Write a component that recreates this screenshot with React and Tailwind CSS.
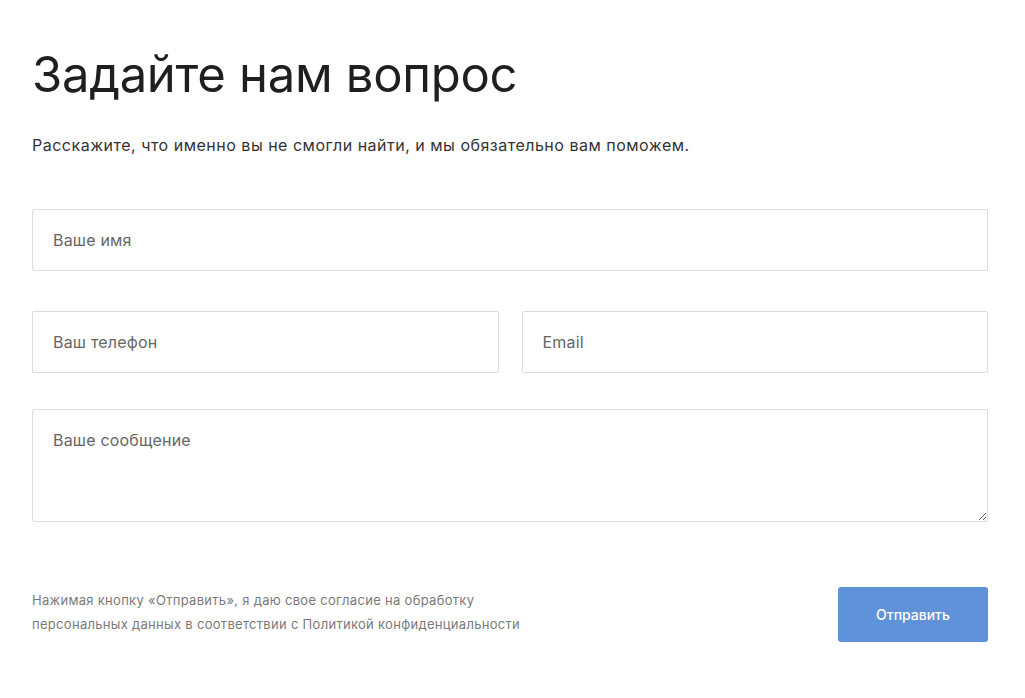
import React from 'react';

export default function App() {
  const field =
    "w-full h-[62px] border border-[#dcdcdc] rounded-[2px] bg-white px-5 text-[16px] tracking-[0.2px] text-[#333] placeholder:text-[#666] outline-none";

  return (
    <div className="min-h-[698px] bg-white font-['Inter',sans-serif] text-[#222]">
      <div className="w-[956px] ml-[32px] pt-[45px]">
        <h1 className="text-[49px] leading-[60px] font-normal text-[#1f1f1f] tracking-[-0.3px]">
          Задайте нам вопрос
        </h1>
        <p className="mt-[28px] text-[16px] leading-[24px] tracking-[0.5px] text-[#333]">
          Расскажите, что именно вы не смогли найти, и мы обязательно вам поможем.
        </p>

        <form className="mt-[52px] flex flex-col">
          <input className={field} placeholder="Ваше имя" />
          <div className="mt-[40px] flex gap-[23px]">
            <input className={field} placeholder="Ваш телефон" />
            <input className={field} placeholder="Email" />
          </div>
          <textarea
            className="mt-[36px] w-full h-[113px] border border-[#dcdcdc] rounded-[2px] bg-white px-5 pt-[18px] text-[16px] tracking-[0.2px] text-[#333] placeholder:text-[#666] outline-none"
            placeholder="Ваше сообщение"
          />

          <div className="mt-[65px] flex items-start justify-between">
            <p className="pt-[1px] text-[13px] leading-[24px] tracking-[0.3px] text-[#7a7a7a] w-[520px]">
              Нажимая кнопку «Отправить», я даю свое согласие на обработку
              <br />
              персональных данных в соответствии с Политикой конфиденциальности
            </p>
            <button
              type="button"
              className="w-[150px] h-[55px] rounded-[3px] bg-[#5f92d8] text-white text-[14px] font-medium"
            >
              Отправить
            </button>
          </div>
        </form>
      </div>
    </div>
  );
}
